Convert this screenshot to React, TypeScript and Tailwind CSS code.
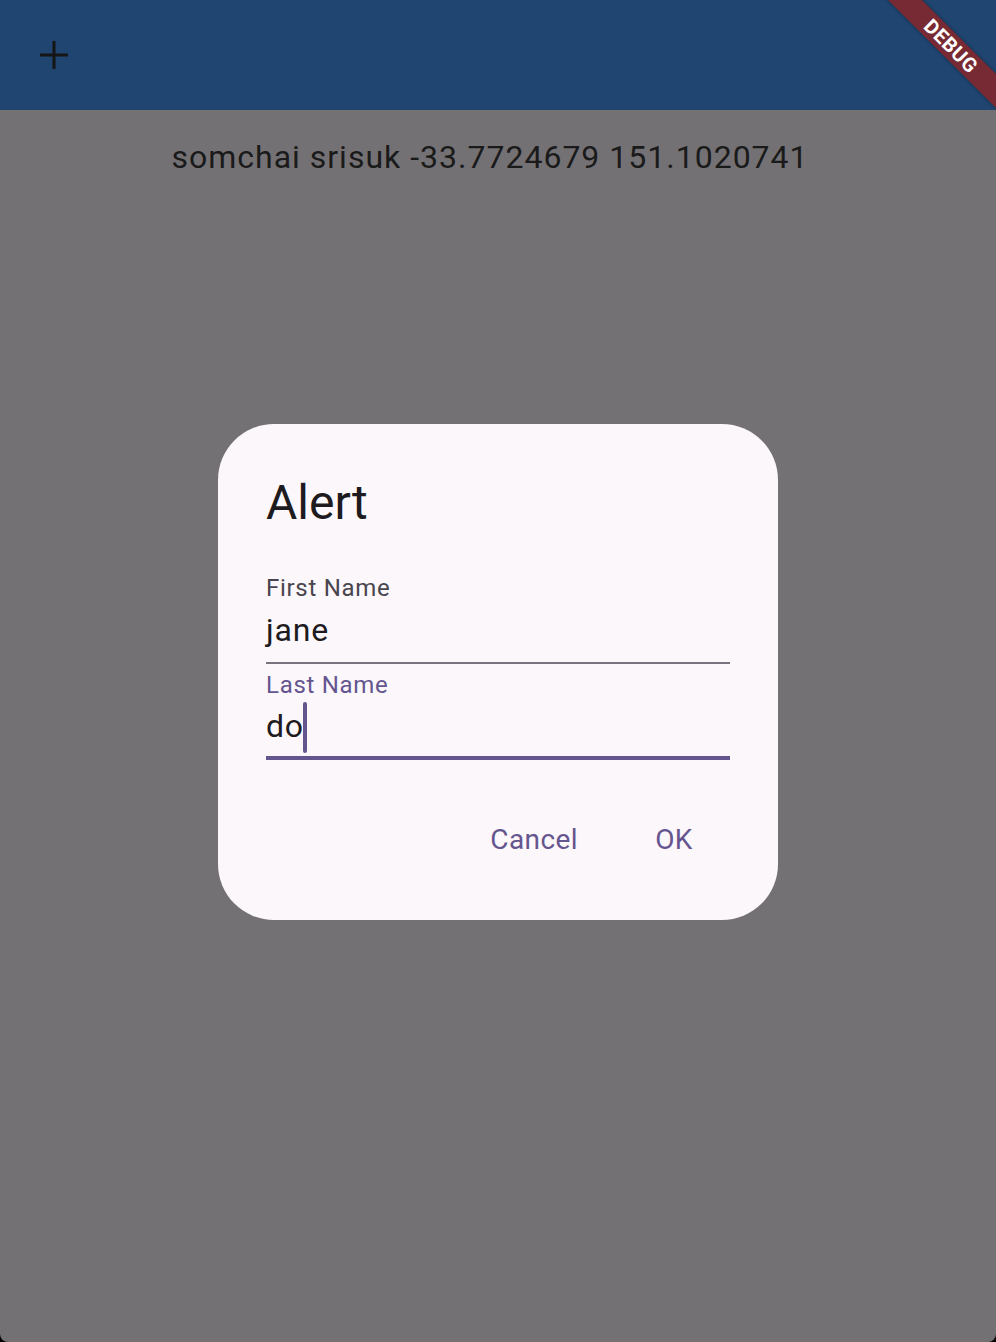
import React from "react";

export default function App() {
  return (
    <div className="w-[996px] h-[1342px] bg-black overflow-hidden" style={{ fontFamily: "Roboto, 'Noto Sans', sans-serif" }}>
      <div className="relative w-full h-full bg-[#747174] rounded-b-[8px] overflow-hidden flex flex-col">
        {/* App bar */}
        <div className="h-[110px] bg-[#1f4570] flex items-center pl-[40px] shrink-0">
          <svg width="28" height="28" viewBox="0 0 28 28" className="block">
            <rect x="12.5" y="0" width="3" height="28" fill="#151515" />
            <rect x="0" y="12.5" width="28" height="3" fill="#151515" />
          </svg>
        </div>
        {/* Body */}
        <div className="flex justify-center pr-[16px] pt-[27px]">
          <div className="text-[32px] leading-[40px] tracking-[1px] text-[#1a1a1a]">
            somchai srisuk -33.7724679 151.1020741
          </div>
        </div>

        {/* Dialog */}
        <div className="absolute left-[218px] top-[424px] w-[560px] h-[496px] bg-[#fcf7fb] rounded-[56px] px-[48px]">
          <div className="pt-[47px] text-[48px] leading-[64px] text-[#1d1b20]">Alert</div>
          <div className="mt-[37px]">
            <div className="text-[24px] leading-[32px] tracking-[0.7px] text-[#49454f]">First Name</div>
            <div className="mt-[6px] text-[32px] leading-[40px] tracking-[0.8px] text-[#1d1b20] pb-[12px]">jane</div>
            <div className="h-[2px] bg-[#79747e]"></div>
          </div>
          <div className="mt-[5px]">
            <div className="text-[24px] leading-[32px] tracking-[0.7px] text-[#65558f]">Last Name</div>
            <div className="relative mt-[5px] text-[32px] leading-[40px] tracking-[0.8px] text-[#1d1b20] pb-[10px]">
              <span>do</span>
              <span className="absolute left-[37px] top-[-4px] w-[4px] h-[51px] bg-[#65558f] rounded-full"></span>
            </div>
            <div className="h-[4px] bg-[#65558f]"></div>
          </div>
          <div className="flex justify-end mt-[40px] gap-[16px]">
            <div className="h-[80px] px-[24px] flex items-center text-[28px] tracking-[0.4px] text-[#65558f]">Cancel</div>
            <div className="h-[80px] w-[112px] flex items-center justify-center text-[28px] tracking-[0.4px] text-[#65558f]">OK</div>
          </div>
        </div>

        {/* Debug banner */}
        <div className="absolute left-[850.5px] top-[33.5px] w-[200px] h-[24px] bg-[#772a33] rotate-45 flex items-center justify-center shadow-[0_0_4px_rgba(0,0,0,0.35)]">
          <span className="text-white font-bold text-[20px] leading-[24px] tracking-[0.5px]" style={{ fontFamily: "Roboto, 'DejaVu Sans', sans-serif" }}>DEBUG</span>
        </div>
      </div>
    </div>
  );
}
